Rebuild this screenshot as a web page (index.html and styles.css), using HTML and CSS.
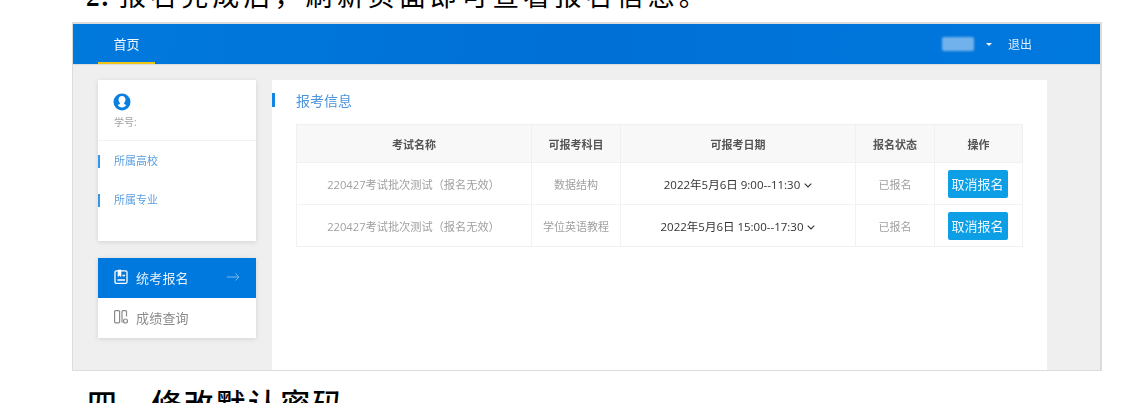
FILE: index.html
```html
<!DOCTYPE html>
<html lang="zh-CN">
<head>
<meta charset="utf-8">
<title>报名信息</title>
<link rel="stylesheet" href="styles.css">
</head>
<body>
<div class="doc">
  <div class="clip-top"><p class="doc-line"><span class="num">2. </span>报名完成后，刷新页面即可查看报名信息。</p></div>
  <div class="shot">
    <header class="topbar">
      <nav class="nav"><a class="nav-item">首页</a></nav>
      <div class="user">
        <span class="user-name"></span>
        <span class="caret"></span>
        <a class="logout">退出</a>
      </div>
    </header>
    <div class="content">
      <aside class="side">
        <section class="card profile">
          <div class="profile-head">
            <svg class="avatar" viewBox="0 0 18 18" width="18" height="18">
              <circle cx="9" cy="9" r="8.500" fill="#0a7fe0"/>
              <path d="M9 3c-2.200 0-3.500 1.600-3.500 3.600 0 1.600.7 2.800 1.500 3.500.2.900-.6 1.500-2.300 2 1 1.600 2.500 2.500 4.300 2.500s3.300-.9 4.300-2.500c-1.700-.5-2.500-1.100-2.300-2 .8-.7 1.500-1.900 1.500-3.500C12.500 4.600 11.200 3 9 3z" fill="#fff"/>
            </svg>
            <div class="sid">学号:</div>
          </div>
          <ul class="info">
            <li>所属高校</li>
            <li>所属专业</li>
          </ul>
        </section>
        <section class="card menu">
          <a class="menu-item active">
            <svg class="mi" viewBox="0 0 14 16" width="14" height="16" fill="none" stroke="#fff" stroke-width="1.300">
              <rect x="1" y="1.800" width="12" height="12.600" rx="1.500"/>
              <path d="M4 1v6.600l1.500-1.200L7 7.600V1z" fill="#fff" stroke-width=".6"/>
              <path d="M8.500 6.500h2.500M3.500 11h7.500"/>
            </svg>
            <span class="mt">统考报名</span>
            <svg class="arrow" viewBox="0 0 13 10" width="13" height="10" fill="none" stroke="#7db9ee" stroke-width="1">
              <path d="M0 5h12M8.500 1.500 12 5 8.500 8.500"/>
            </svg>
          </a>
          <a class="menu-item">
            <svg class="mi" viewBox="0 0 14 16" width="14" height="16" fill="none" stroke="#8a8a8a" stroke-width="1.200">
              <rect x=".6" y="1.600" width="5" height="12.200" rx="1"/>
              <path d="M8 13.500V2.600a1 1 0 0 1 1-1h2.500a1 1 0 0 1 1 1v5"/>
              <circle cx="11.500" cy="12" r="2"/>
            </svg>
            <span class="mt">成绩查询</span>
          </a>
        </section>
      </aside>
      <main class="main">
        <h2 class="title">报考信息</h2>
        <table class="tbl">
          <colgroup>
            <col class="c1"><col class="c2"><col class="c3"><col class="c4"><col class="c5">
          </colgroup>
          <thead>
            <tr><th>考试名称</th><th>可报考科目</th><th>可报考日期</th><th>报名状态</th><th>操作</th></tr>
          </thead>
          <tbody>
            <tr>
              <td class="name">220427考试批次测试（报名无效）</td>
              <td>数据结构</td>
              <td class="date">2022年5月6日 9:00--11:30 <svg class="chev" viewBox="0 0 8 5" width="8" height="5"><path d="M.7.7 4 4 7.300.7" fill="none" stroke="#333" stroke-width="1.100"/></svg></td>
              <td>已报名</td>
              <td class="op"><button class="btn" type="button">取消报名</button></td>
            </tr>
            <tr>
              <td class="name">220427考试批次测试（报名无效）</td>
              <td>学位英语教程</td>
              <td class="date">2022年5月6日 15:00--17:30 <svg class="chev" viewBox="0 0 8 5" width="8" height="5"><path d="M.7.7 4 4 7.300.7" fill="none" stroke="#333" stroke-width="1.100"/></svg></td>
              <td>已报名</td>
              <td class="op"><button class="btn" type="button">取消报名</button></td>
            </tr>
          </tbody>
        </table>
      </main>
    </div>
  </div>
  <h1 class="doc-head">四、修改默认密码</h1>
</div>
</body>
</html>
```
FILE: styles.css
```css
* { box-sizing: border-box; }
html, body { margin: 0; padding: 0; background: #fff; height: 403px; overflow: hidden; }
body { font-family: "Liberation Serif", "Noto Sans CJK SC", serif; color: #000; }

.doc { display: flex; flex-direction: column; padding-left: 72px; width: 1145px; height: 403px; overflow: hidden; }

.clip-top { height: 22px; flex: none; overflow: hidden; display: flex; align-items: flex-end; }
.doc-line {
  margin: 0 0 10px 14px;
  font-size: 27px;
  line-height: 30px;
  letter-spacing: 4.100px;
  white-space: nowrap;
  font-family: "Noto Sans CJK SC", serif;
  font-weight: 400;
}
.num { font-family: "Liberation Serif", serif; font-weight: 700; letter-spacing: 2px; }

.shot {
  width: 1030px;
  height: 349px;
  flex: none;
  border: 1px solid #dcdcdc;
  border-top-width: 2px;
  border-right-width: 2px;
  background: #efefef;
  display: flex;
  flex-direction: column;
  font-family: "Open Sans", "Noto Sans CJK SC", sans-serif;
  filter: blur(0.35px);
}

.topbar {
  height: 40px;
  flex: none;
  background: linear-gradient(100deg, #0079dd 0%, #0070d6 50%, #0079de 100%);
  display: flex;
  justify-content: space-between;
  align-items: stretch;
  padding: 0 68px 0 25px;
  box-shadow: 0 1px 1px rgba(0,0,0,.08);
}
.nav { display: flex; }
.nav-item {
  width: 57px;
  display: flex;
  align-items: center;
  justify-content: center;
  color: #f2f8fe;
  font-size: 13px;
  border-bottom: 2px solid #efc415;
}
.user { display: flex; align-items: center; }
.user-name {
  width: 32px;
  height: 14px;
  background: #71b1ec;
  border-radius: 2px;
  filter: blur(1.200px);
  margin-right: 12px;
}
.caret {
  width: 0; height: 0;
  border: 3px solid transparent;
  border-top: 3px solid #f2f8fe;
  border-bottom: 0;
  margin-right: 16px;
}
.logout { color: #dbecfb; font-size: 12px; }

.content { flex: 1; display: flex; padding: 16px 54px 0 25px; min-height: 0; }

.side { width: 158px; flex: none; display: flex; flex-direction: column; gap: 17px; margin-right: 16px; }
.card { background: #fff; box-shadow: 0 1px 5px rgba(0,0,0,.12); }

.profile { height: 161px; }
.profile-head { height: 61px; padding: 13px 16px 0; border-bottom: 1px solid #f3f3f3; }
.avatar { display: block; margin-left: -1px; }
.sid { margin-top: 4px; font-size: 10px; line-height: 14px; color: #a3a3a3; }
.info { list-style: none; margin: 14px 0 0; padding: 0; }
.info li {
  height: 13px;
  margin-bottom: 26px;
  padding-left: 14px;
  border-left: 2px solid #3498ea;
  color: #5a9fe0;
  font-size: 11px;
  line-height: 11px;
}

.menu { height: 80px; display: flex; flex-direction: column; }
.menu-item {
  height: 40px;
  display: flex;
  align-items: center;
  padding: 0 16px 2px 16px;
  color: #8a8a8a;
  font-size: 13px;
}
.menu-item.active { background: #0079de; color: #e4f1fc; }
.mi { flex: none; margin-right: 8px; }
.mt { flex: 1; letter-spacing: .2px; }
.arrow { flex: none; }

.main { flex: 1; background: #fff; padding: 12px 24px 0; position: relative; }
.main::before {
  content: "";
  position: absolute;
  left: 0; top: 13px;
  width: 3px; height: 14px;
  background: #1482e2;
}
.title { margin: 0 0 15px; font-size: 14px; line-height: 17px; font-weight: 400; color: #4a94dc; }

.tbl {
  width: 726px;
  table-layout: fixed;
  border-collapse: collapse;
  border: 1px solid #f0f0f0;
  font-size: 11px;
  color: #a0a0a0;
  text-align: center;
}
.c1 { width: 235px; } .c2 { width: 89px; } .c3 { width: 235px; } .c4 { width: 79px; } .c5 { width: 88px; }
.tbl th {
  height: 38px;
  padding: 0;
  background: #f8f8f8;
  color: #555;
  font-weight: 700;
  border: 1px solid #f0f0f0;
}
.tbl td { height: 42px; padding: 0; border: 1px solid #f2f2f2; }
.tbl td.name { padding-right: 1px; font-size: 11.200px; }
.tbl td.date { color: #333; font-size: 11.500px; }
.tbl td.op { padding-right: 2px; }
.chev { vertical-align: 1px; margin-left: 1px; }
.btn {
  width: 60px;
  height: 28px;
  border: 0;
  border-radius: 2px;
  padding: 0;
  background: #0d9fe6;
  color: #eef8fe;
  font-family: inherit;
  font-size: 13px;
  display: inline-block;
  vertical-align: middle;
}

.doc-head {
  flex: none;
  margin: 12px 0 0 15px;
  font-size: 30px;
  line-height: 38px;
  font-weight: 500;
  letter-spacing: 2.200px;
  white-space: nowrap;
  font-family: "Noto Sans CJK SC", serif;
}
```
